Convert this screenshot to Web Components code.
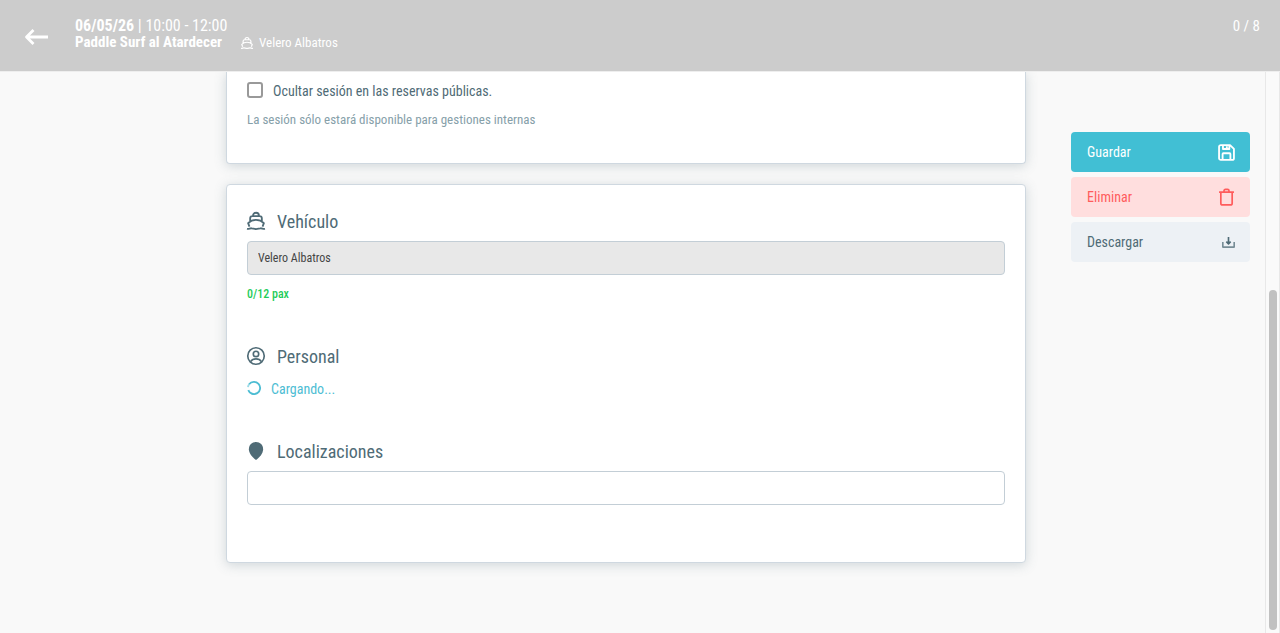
<!DOCTYPE html>
<html lang="es">
<head>
<meta charset="utf-8">
<meta name="viewport" content="width=device-width, initial-scale=1">
<title>Paddle Surf al Atardecer</title>
<style>
  html, body { height: 100%; margin: 0; }
  body {
    --ink: #4f6b76;
    --line: #c3ced6;
    --accent: #41bfd4;
    background: #f9f9f9;
    color: var(--ink);
    font-family: "Roboto Condensed", "Liberation Sans Narrow", Roboto, sans-serif;
    font-size: 14px;
    line-height: 20px;
    overflow: hidden;
  }
</style>
</head>
<body>
<session-page></session-page>
<script>
const ICONS = {
  back: '<path d="M9.500 5 2.500 12l7 7M3 12H24" stroke-width="2.800"/>',
  boat: '<path d="M3.300 19.500 1.500 14.800C4.500 11.800 8 10.500 12 10.500s7.500 1.300 10.500 4.300l-1.800 4.700M4.200 12.500V8.500a3 3 0 0 1 3-3h9.600a3 3 0 0 1 3 3v4M8 5.300C8 2.500 9.500 1 12 1s4 1.500 4 4.300" stroke-width="2.400"/><path d="M0 22.500c2.400.6 4-1 6-.8s3.800 1 6 1 4-.8 6-1 3.600 1.400 6 .8" stroke-width="2.400"/>',
  person: '<circle cx="12" cy="12" r="11"/><circle cx="12" cy="9.300" r="3.600"/><path d="M4.800 19.500c1.700-2.600 4.200-3.600 7.200-3.600s5.500 1 7.200 3.600"/>',
  pin: '<path d="M12 0c5.500 0 9.500 4 9.500 9.500 0 5.700-4.700 10.500-9.500 14.500C7.200 20 2.500 15.200 2.500 9.500 2.500 4 6.500 0 12 0Z" fill="currentColor" stroke="none"/>',
  spinner: '<path d="M3.600 5.600A10.500 10.500 0 1 1 2.200 15.700" stroke-width="3.200"/><path d="M1.700 10.500a10.500 10.500 0 0 1 1.900-4.900" stroke-width="3.200" opacity=".55"/>',
  save: '<path d="M4 1.500h13l5.500 5.500v13a2.500 2.500 0 0 1-2.500 2.500H4A2.500 2.500 0 0 1 1.500 20V4A2.500 2.500 0 0 1 4 1.500ZM6.500 22v-8a1 1 0 0 1 1-1h9a1 1 0 0 1 1 1v8M7 2v5h9V2M12.500 3v2.500" stroke-width="2.600"/>',
  trash: '<path d="M1.500 4.500h21M4 5v15a2.500 2.500 0 0 0 2.500 2.500h11A2.500 2.500 0 0 0 20 20V5M8.500 4V2.500a2 2 0 0 1 2-2h3a2 2 0 0 1 2 2V4" stroke-width="2.400"/>',
  download: '<path d="M1.500 11v9.500h21V11" stroke-width="3" opacity=".75"/><path d="M12 2v12M8 10.500l4 4 4-4" stroke-width="3"/>'
};

function define(name, html, init) {
  const template = document.createElement('template');
  template.innerHTML = html;
  customElements.define(name, class extends HTMLElement {
    constructor() {
      super();
      this.attachShadow({ mode: 'open' }).append(template.content.cloneNode(true));
    }
    connectedCallback() { if (init) init(this, this.shadowRoot); }
  });
}

define('ui-icon', `
  <style>
    :host { display: block; flex: none; width: var(--size, 18px); height: var(--size, 18px); }
    svg { display: block; width: 100%; height: 100%; overflow: visible; fill: none; stroke: currentColor; stroke-width: 2.2; stroke-linejoin: round; }
  </style>
  <svg viewBox="0 0 24 24" aria-hidden="true"></svg>
`, (el, root) => { root.querySelector('svg').innerHTML = ICONS[el.getAttribute('name')]; });

define('session-header', `
  <style>
    :host { display: flex; align-items: flex-start; box-sizing: border-box; height: 72px; padding: 18px 20px 0 24px; background: #ccc; border-bottom: 1px solid #eee; color: #fff; }
    a { color: inherit; margin: 7px 27px 0 0; --size: 24px; }
    .info { flex: 1; line-height: 16px; font-size: 16px; }
    p { margin: 0; }
    .row { display: flex; align-items: flex-start; }
    .name { font-size: 15px; font-weight: 700; margin-right: 19px; }
    .boat { display: flex; align-items: center; gap: 6px; font-size: 13px; line-height: 18px; --size: 12px; }
    .count { font-size: 15px; line-height: 16px; }
  </style>
  <a href="#" aria-label="Volver"><ui-icon name="back"></ui-icon></a>
  <div class="info">
    <p><b>06/05/26</b> | 10:00 - 12:00</p>
    <div class="row"><span class="name">Paddle Surf al Atardecer</span><span class="boat"><ui-icon name="boat"></ui-icon>Velero Albatros</span></div>
  </div>
  <span class="count">0 / 8</span>
`);

define('ui-card', `
  <style>
    :host { display: block; box-sizing: border-box; padding: 20px; background: #fff; border: 1px solid #cfd8e0; border-radius: 4px; box-shadow: 0 2px 12px rgba(84,110,122,.25); }
    :host([continued]) { border-top: 0; border-radius: 0 0 4px 4px; padding-top: 9px; padding-bottom: 33px; }
  </style>
  <slot></slot>
`);

define('hide-option', `
  <style>
    :host { display: block; }
    label { display: flex; align-items: center; gap: 10px; }
    input { appearance: none; box-sizing: border-box; width: 16px; height: 16px; margin: 0 0 2px; border: 2px solid #999; border-radius: 3px; background: #fff; }
    input:checked { background: var(--accent); }
    p { margin: 9px 0 0; font-size: 13px; color: #86a0a9; }
  </style>
  <label><input type="checkbox" aria-describedby="hint">Ocultar sesión en las reservas públicas.</label>
  <p id="hint">La sesión sólo estará disponible para gestiones internas</p>
`);

define('form-section', `
  <style>
    :host { display: block; box-sizing: border-box; }
    h2 { display: flex; align-items: center; gap: 12px; margin: 0 0 7px; font-size: 18px; font-weight: 400; line-height: 24px; }
    ui-icon { margin-bottom: 3px; }
  </style>
  <h2><span></span></h2>
  <slot></slot>
`, (el, root) => {
  const icon = document.createElement('ui-icon');
  icon.setAttribute('name', el.getAttribute('icon'));
  root.querySelector('h2').prepend(icon);
  root.querySelector('span').textContent = el.getAttribute('heading');
});

define('text-field', `
  <style>
    :host { display: block; }
    input { display: block; box-sizing: border-box; width: 100%; height: 34px; padding: 0 10px; border: 1px solid var(--line); border-radius: 4px; background: #fff; color: #444; font: inherit; font-size: 12px; }
    input:disabled { background: #e8e8e8; }
  </style>
  <input type="text">
`, (el, root) => {
  const input = root.querySelector('input');
  input.value = el.getAttribute('value') || '';
  input.disabled = el.hasAttribute('disabled');
  input.setAttribute('aria-label', el.getAttribute('label'));
});

define('action-button', `
  <style>
    :host { display: block; }
    button { display: flex; align-items: center; justify-content: space-between; box-sizing: border-box; width: 100%; height: 40px; padding: 0 15px 0 16px; border: 0; border-radius: 4px; font: inherit; color: var(--ink); background: #edf1f5; --size: 17px; }
    :host([kind=primary]) button { color: #fff; background: var(--accent); }
    :host([kind=danger]) button { color: #ff5c5c; background: #ffdede; }
    :host([kind=plain]) button { --size: 13px; }
  </style>
  <button type="button"><slot></slot><slot name="icon"></slot></button>
`);

define('session-page', `
  <style>
    :host { display: flex; flex-direction: column; height: 100%; }
    .body { flex: 1; min-height: 0; display: flex; }
    main { flex: 1; min-width: 0; overflow: hidden; display: grid; grid-template-columns: minmax(0, 226fr) minmax(0, 800px) minmax(194px, 239fr); align-items: start; }
    .cards { grid-column: 2; display: grid; gap: 20px; }
    .form { display: grid; gap: 41px; padding: 5px 0 37px; }
    .pax { margin: 9px 0 0; font-size: 12px; font-weight: 500; color: #1fcc5a; }
    .loading { display: flex; align-items: center; gap: 10px; margin: 10px 0 0; color: #4dbdd3; --size: 14px; }
    .loading ui-icon { margin-bottom: 2px; }
    aside { justify-self: end; width: 179px; margin: 60px 15px 0 0; display: grid; gap: 5px; }
    .track { display: flex; align-items: flex-end; justify-content: center; box-sizing: border-box; width: 15px; padding-bottom: 3px; border: solid #e8e8e8; border-width: 0 1px; background: #fafafa; }
    .thumb { width: 8px; height: 61%; border-radius: 4px; background: #c1c1c1; }
  </style>
  <session-header></session-header>
  <div class="body">
    <main>
      <div class="cards">
        <ui-card continued><hide-option></hide-option></ui-card>
        <ui-card>
          <div class="form">
            <form-section icon="boat" heading="Vehículo">
              <text-field label="Vehículo" value="Velero Albatros" disabled></text-field>
              <p class="pax">0/12 pax</p>
            </form-section>
            <form-section icon="person" heading="Personal">
              <p class="loading"><ui-icon name="spinner"></ui-icon>Cargando...</p>
            </form-section>
            <form-section icon="pin" heading="Localizaciones">
              <text-field label="Localizaciones"></text-field>
            </form-section>
          </div>
        </ui-card>
      </div>
      <aside>
        <action-button kind="primary">Guardar<ui-icon slot="icon" name="save"></ui-icon></action-button>
        <action-button kind="danger">Eliminar<ui-icon slot="icon" name="trash"></ui-icon></action-button>
        <action-button kind="plain">Descargar<ui-icon slot="icon" name="download"></ui-icon></action-button>
      </aside>
    </main>
    <div class="track"><div class="thumb"></div></div>
  </div>
`);
</script>
</body>
</html>
